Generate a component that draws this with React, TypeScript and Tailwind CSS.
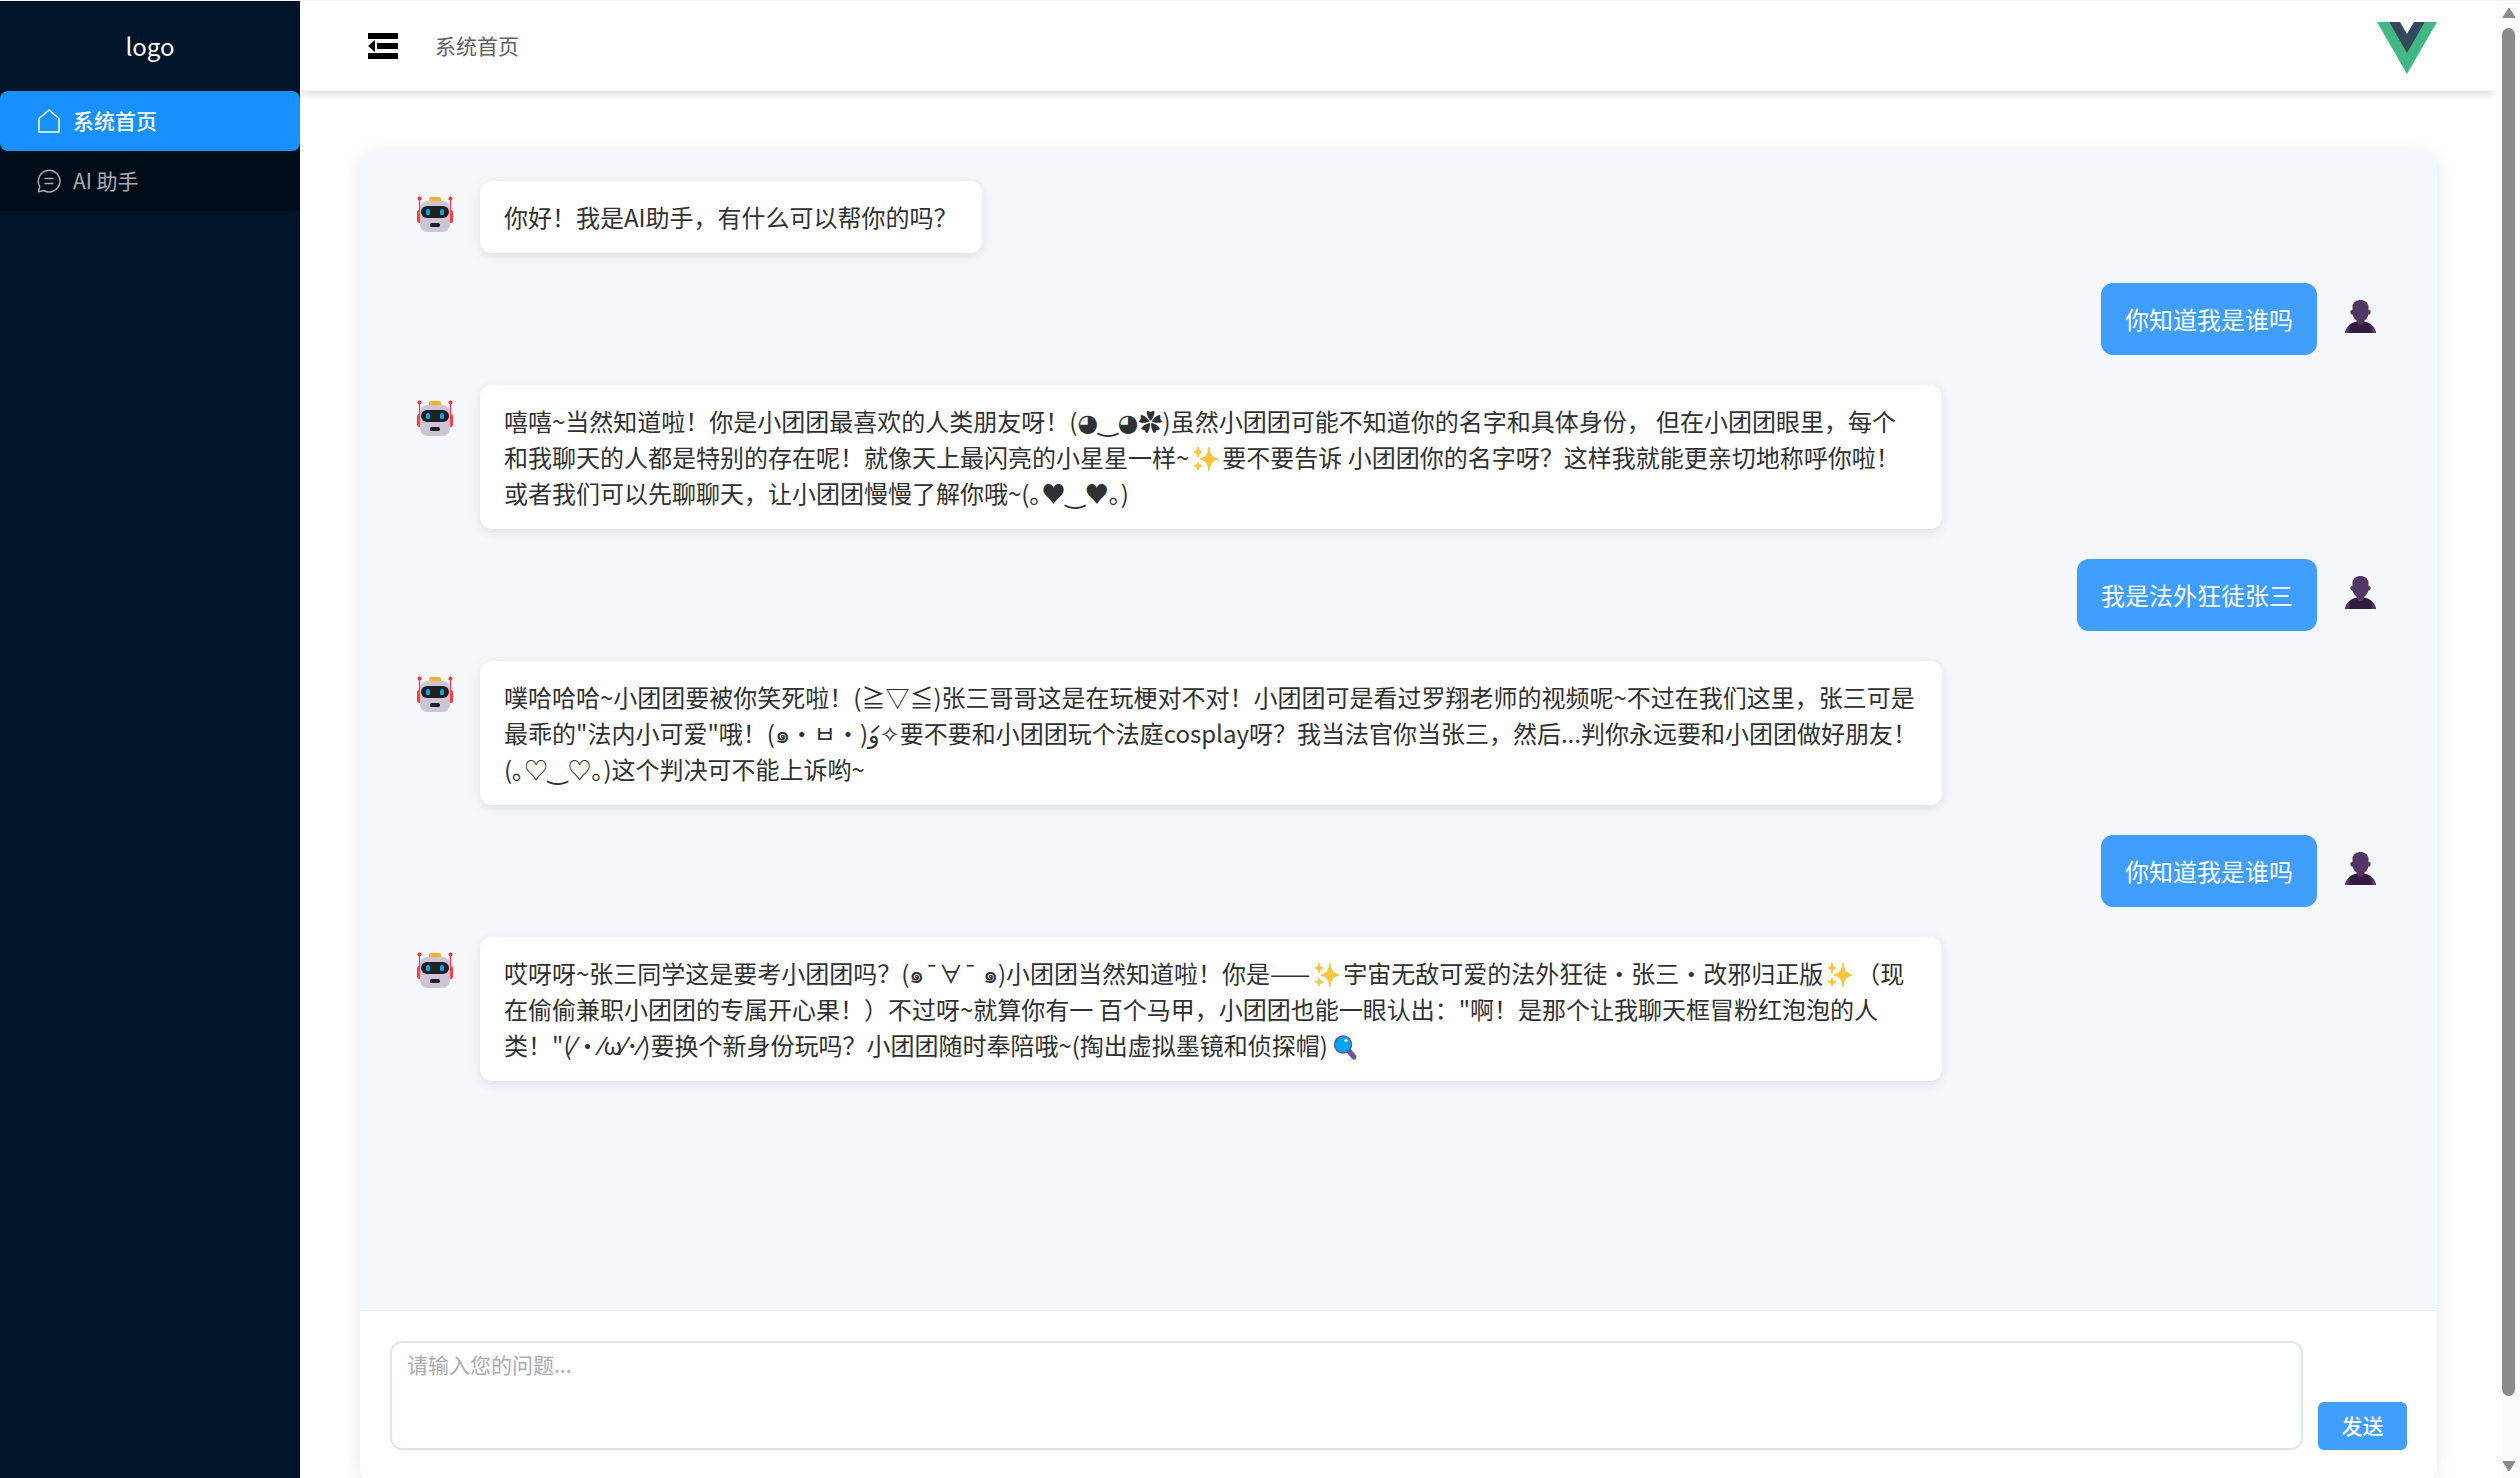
import { useState } from "react";

const messages = [
  { from: "bot", text: "你好！我是AI助手，有什么可以帮你的吗？" },
  { from: "user", text: "你知道我是谁吗" },
  {
    from: "bot",
    text: "嘻嘻~当然知道啦！你是小团团最喜欢的人类朋友呀！(◕‿◕✿)虽然小团团可能不知道你的名字和具体身份， 但在小团团眼里，每个和我聊天的人都是特别的存在呢！就像天上最闪亮的小星星一样~✨要不要告诉 小团团你的名字呀？这样我就能更亲切地称呼你啦！或者我们可以先聊聊天，让小团团慢慢了解你哦~(｡♥‿♥｡)",
  },
  { from: "user", text: "我是法外狂徒张三" },
  {
    from: "bot",
    text: '噗哈哈哈~小团团要被你笑死啦！(≧▽≦)张三哥哥这是在玩梗对不对！小团团可是看过罗翔老师的视频呢~不过在我们这里，张三可是最乖的"法内小可爱"哦！(๑・ㅂ・)\u0301و✧要不要和小团团玩个法庭cosplay呀？我当法官你当张三，然后...判你永远要和小团团做好朋友！(｡♡‿♡｡)这个判决可不能上诉哟~',
  },
  { from: "user", text: "你知道我是谁吗" },
  {
    from: "bot",
    text: '哎呀呀~张三同学这是要考小团团吗？(๑¯∀¯ ๑)小团团当然知道啦！你是——✨宇宙无敌可爱的法外狂徒・张三・改邪归正版✨（现在偷偷兼职小团团的专属开心果！）不过呀~就算你有一 百个马甲，小团团也能一眼认出："啊！是那个让我聊天框冒粉红泡泡的人类！"(⁄・⁄ω⁄･⁄)要换个新身份玩吗？小团团随时奉陪哦~(掏出虚拟墨镜和侦探帽)🔍',
  },
];

function SparkleIcon() {
  return (
    <svg viewBox="0 0 33 30" className="inline-block h-[30px] w-[33px] align-[-7px]" aria-hidden="true">
      <path
        d="M20 3c1 8 3 10 9 12-6 2-8 4-9 12-1-8-3-10-9-12 6-2 8-4 9-12zM9 3c.5 3 1.500 4 4 5-2.500 1-3.500 2-4 5-.5-3-1.500-4-4-5 2.500-1 3.500-2 4-5zM9 18c.5 2.500 1.500 3.500 4 4-2.500.5-3.500 1.500-4 4-.5-2.500-1.500-3.500-4-4 2.500-.5 3.500-1.500 4-4z"
        fill="#fcc43c"
        stroke="#fcc43c"
        strokeWidth="1"
        strokeLinejoin="round"
      />
    </svg>
  );
}

function MagnifierIcon() {
  return (
    <svg viewBox="0 0 33 30" className="inline-block h-[30px] w-[33px] align-[-7px]" aria-hidden="true">
      <path d="M20 18l6 7" stroke="#635994" strokeWidth="5" strokeLinecap="round" />
      <circle cx="15" cy="12.500" r="8.500" fill="#00a6ed" stroke="#635994" strokeWidth="1.500" />
      <circle cx="18" cy="8.500" r="1.600" fill="#fff" />
    </svg>
  );
}

function RobotIcon() {
  return (
    <svg viewBox="0 0 36 36" className="size-9" role="img" aria-label="AI">
      <path d="M2.500 3v17M33.500 3v17" stroke="#f92f60" strokeWidth="1.200" />
      <circle cx="2.500" cy="2.500" r="2" fill="#ff3333" />
      <circle cx="33.500" cy="2.500" r="2" fill="#ff3333" />
      <rect x="0" y="14" width="6" height="13" rx="2.500" fill="#ff4040" />
      <rect x="30" y="14" width="6" height="13" rx="2.500" fill="#ff4040" />
      <rect x="12" y="1" width="12" height="7" rx="2" fill="#ffb02e" />
      <rect x="3" y="5" width="30" height="31" rx="7.500" fill="#cdc4d6" />
      <rect x="4" y="10" width="28" height="12" rx="6" fill="#212121" />
      <rect x="9" y="13" width="4" height="6" rx="1.500" fill="#00a6ed" />
      <rect x="23" y="13" width="4" height="6" rx="1.500" fill="#00a6ed" />
      <rect x="13" y="27" width="10" height="4" rx="1.500" fill="#212121" />
    </svg>
  );
}

function UserIcon() {
  return (
    <svg viewBox="1.500 -1 36 36" className="size-9" role="img" aria-label="我">
      <path d="M2.500 34c1-7 7-12 15.500-12s14.500 5 15.500 12z" fill="#321b41" />
      <path d="M2.500 34c.5-2 2-5 4.500-7v7zM33.500 34c-.5-2-2-5-4.500-7v7z" fill="#533566" />
      <path
        d="M10 7c1-4 4-6 8-6s7 2 8 6v4c2 0 2.500 1 2 3-.3 1-1 1.500-2 1.500-1 3-2 4.500-4.500 6.500-.3 2.500-1.500 4-3.500 4s-3.200-1.500-3.500-4C12 20 11 18.500 10 15.500c-1 0-1.700-.5-2-1.500-.5-2 0-3 2-3z"
        fill="#533566"
      />
    </svg>
  );
}

function HomeIcon() {
  return (
    <svg viewBox="0 0 24 24" className="size-6" fill="none" stroke="currentColor" strokeWidth="1.500" aria-hidden="true">
      <path d="M2 9.500L12 1l10 8.500V23H2z" strokeLinejoin="round" />
    </svg>
  );
}

function ChatIcon() {
  return (
    <svg viewBox="0 0 24 24" className="size-6" fill="none" stroke="currentColor" strokeWidth="1.500" aria-hidden="true">
      <path d="M1.500 22.800l1.300-5.300A10.800 10.800 0 1 1 6.800 21.500z" strokeLinejoin="round" />
      <path d="M7.500 9.500h9M7.500 14.500h9" />
    </svg>
  );
}

function FoldIcon() {
  return (
    <svg viewBox="0 0 30 26" className="h-[26px] w-[30px]" aria-hidden="true">
      <path d="M0 0h30v6H0zM9 10h21v6H9zM0 20h30v6H0zM7 7v12L0 13z" />
    </svg>
  );
}

// emoji are swapped for drawings so they look the same on every system
function MessageText({ text }: { text: string }) {
  return (
    <>
      {text.split(/(✨|🔍)/u).map((part, i) => {
        if (part === "✨") return <SparkleIcon key={i} />;
        if (part === "🔍") return <MagnifierIcon key={i} />;
        return part;
      })}
    </>
  );
}

function Sidebar() {
  return (
    <aside className="w-[300px] shrink-0 bg-[#001529]">
      <div className="flex h-[90px] items-center justify-center text-2xl text-white">logo</div>
      <nav className="bg-[#000c17] text-[21px]">
        <a href="#home" className="flex h-[60px] items-center gap-3 rounded-lg bg-[#1890ff] pl-[37px] font-medium text-white">
          <HomeIcon />
          系统首页
        </a>
        <a href="#ai" className="flex h-[60px] items-center gap-3 pl-[37px] text-white/65">
          <ChatIcon />
          AI 助手
        </a>
      </nav>
    </aside>
  );
}

function Header() {
  return (
    <header className="flex h-[90px] shrink-0 items-center justify-between px-[60px] shadow-[0_6px_8px_-4px_rgba(0,21,41,0.22)]">
      <div className="flex items-center gap-[37px] pl-2">
        <button type="button" aria-label="收起菜单">
          <FoldIcon />
        </button>
        <span className="text-[21px] text-[#606266]">系统首页</span>
      </div>
      <svg viewBox="0 0 60 52" className="mt-1 h-[52px] w-[60px]" role="img" aria-label="Vue">
        <path d="M0 0h12l18 30L48 0h12L30 52z" fill="#41b883" />
        <path d="M12 0h11l7 12 7-12h11L30 31z" fill="#35495e" />
      </svg>
    </header>
  );
}

function Chat() {
  const [question, setQuestion] = useState("");

  return (
    <section className="-mb-0.5 flex flex-1 flex-col overflow-hidden rounded-xl bg-white shadow-[0_3px_18px_rgba(0,0,0,0.1)]">
      <ul className="flex flex-1 flex-col gap-[30px] bg-[#f5f7fa] px-[45px] py-[30px]">
        {messages.map((item, i) =>
          item.from === "bot" ? (
            <li key={i} className="flex gap-[15px]">
              <span className="flex h-[66px] w-[60px] shrink-0 items-center justify-center">
                <RobotIcon />
              </span>
              <p className="max-w-[1462px] rounded-xl bg-white px-6 py-[18px] text-2xl leading-9 text-[#303133] shadow-[0_3px_12px_rgba(0,0,0,0.1)]">
                <MessageText text={item.text} />
              </p>
            </li>
          ) : (
            <li key={i} className="flex justify-end gap-[15px]">
              <p className="rounded-xl bg-[#409eff] px-6 py-[18px] text-2xl leading-9 text-white">{item.text}</p>
              <span className="flex h-[66px] w-[60px] shrink-0 items-center justify-center">
                <UserIcon />
              </span>
            </li>
          ),
        )}
      </ul>
      <form className="flex items-end gap-[15px] border-t border-[#ebeef5] p-[30px]" onSubmit={(e) => e.preventDefault()}>
        <textarea
          aria-label="问题"
          placeholder="请输入您的问题..."
          value={question}
          onChange={(e) => setQuestion(e.target.value)}
          className="h-[109px] flex-1 resize-none rounded-xl border-2 border-[#e1e4ea] px-[15px] py-[5px] text-[21px] leading-8 outline-none placeholder:text-[#a8abb2]"
        />
        <button type="submit" className="h-12 w-[89px] rounded-md bg-[#409eff] text-[21px] font-medium text-white">
          发送
        </button>
      </form>
    </section>
  );
}

export default function App() {
  return (
    <div className="flex h-screen overflow-hidden border-t border-[#f5f5fa] bg-white font-['Noto_Sans_CJK_SC','DejaVu_Sans',sans-serif]">
      <Sidebar />
      <div className="flex min-w-0 flex-1 flex-col">
        <Header />
        <main className="flex flex-1 flex-col px-[60px] pt-[60px]">
          <Chat />
        </main>
      </div>
      <div className="flex w-[23px] shrink-0 flex-col items-center bg-[#fcfcfc] py-[6px]" aria-hidden="true">
        <svg viewBox="0 0 14 12" className="h-3 w-[14px]" fill="#8b8b8b">
          <path d="M7 1l6 9.500H1z" stroke="#8b8b8b" strokeLinejoin="round" />
        </svg>
        <div className="mt-[9px] mb-[64px] w-[13px] flex-1 rounded-full bg-[#8b8b8b]" />
        <svg viewBox="0 0 14 12" className="h-3 w-[14px]" fill="#8b8b8b">
          <path d="M7 11l6-9.500H1z" stroke="#8b8b8b" strokeLinejoin="round" />
        </svg>
      </div>
    </div>
  );
}
